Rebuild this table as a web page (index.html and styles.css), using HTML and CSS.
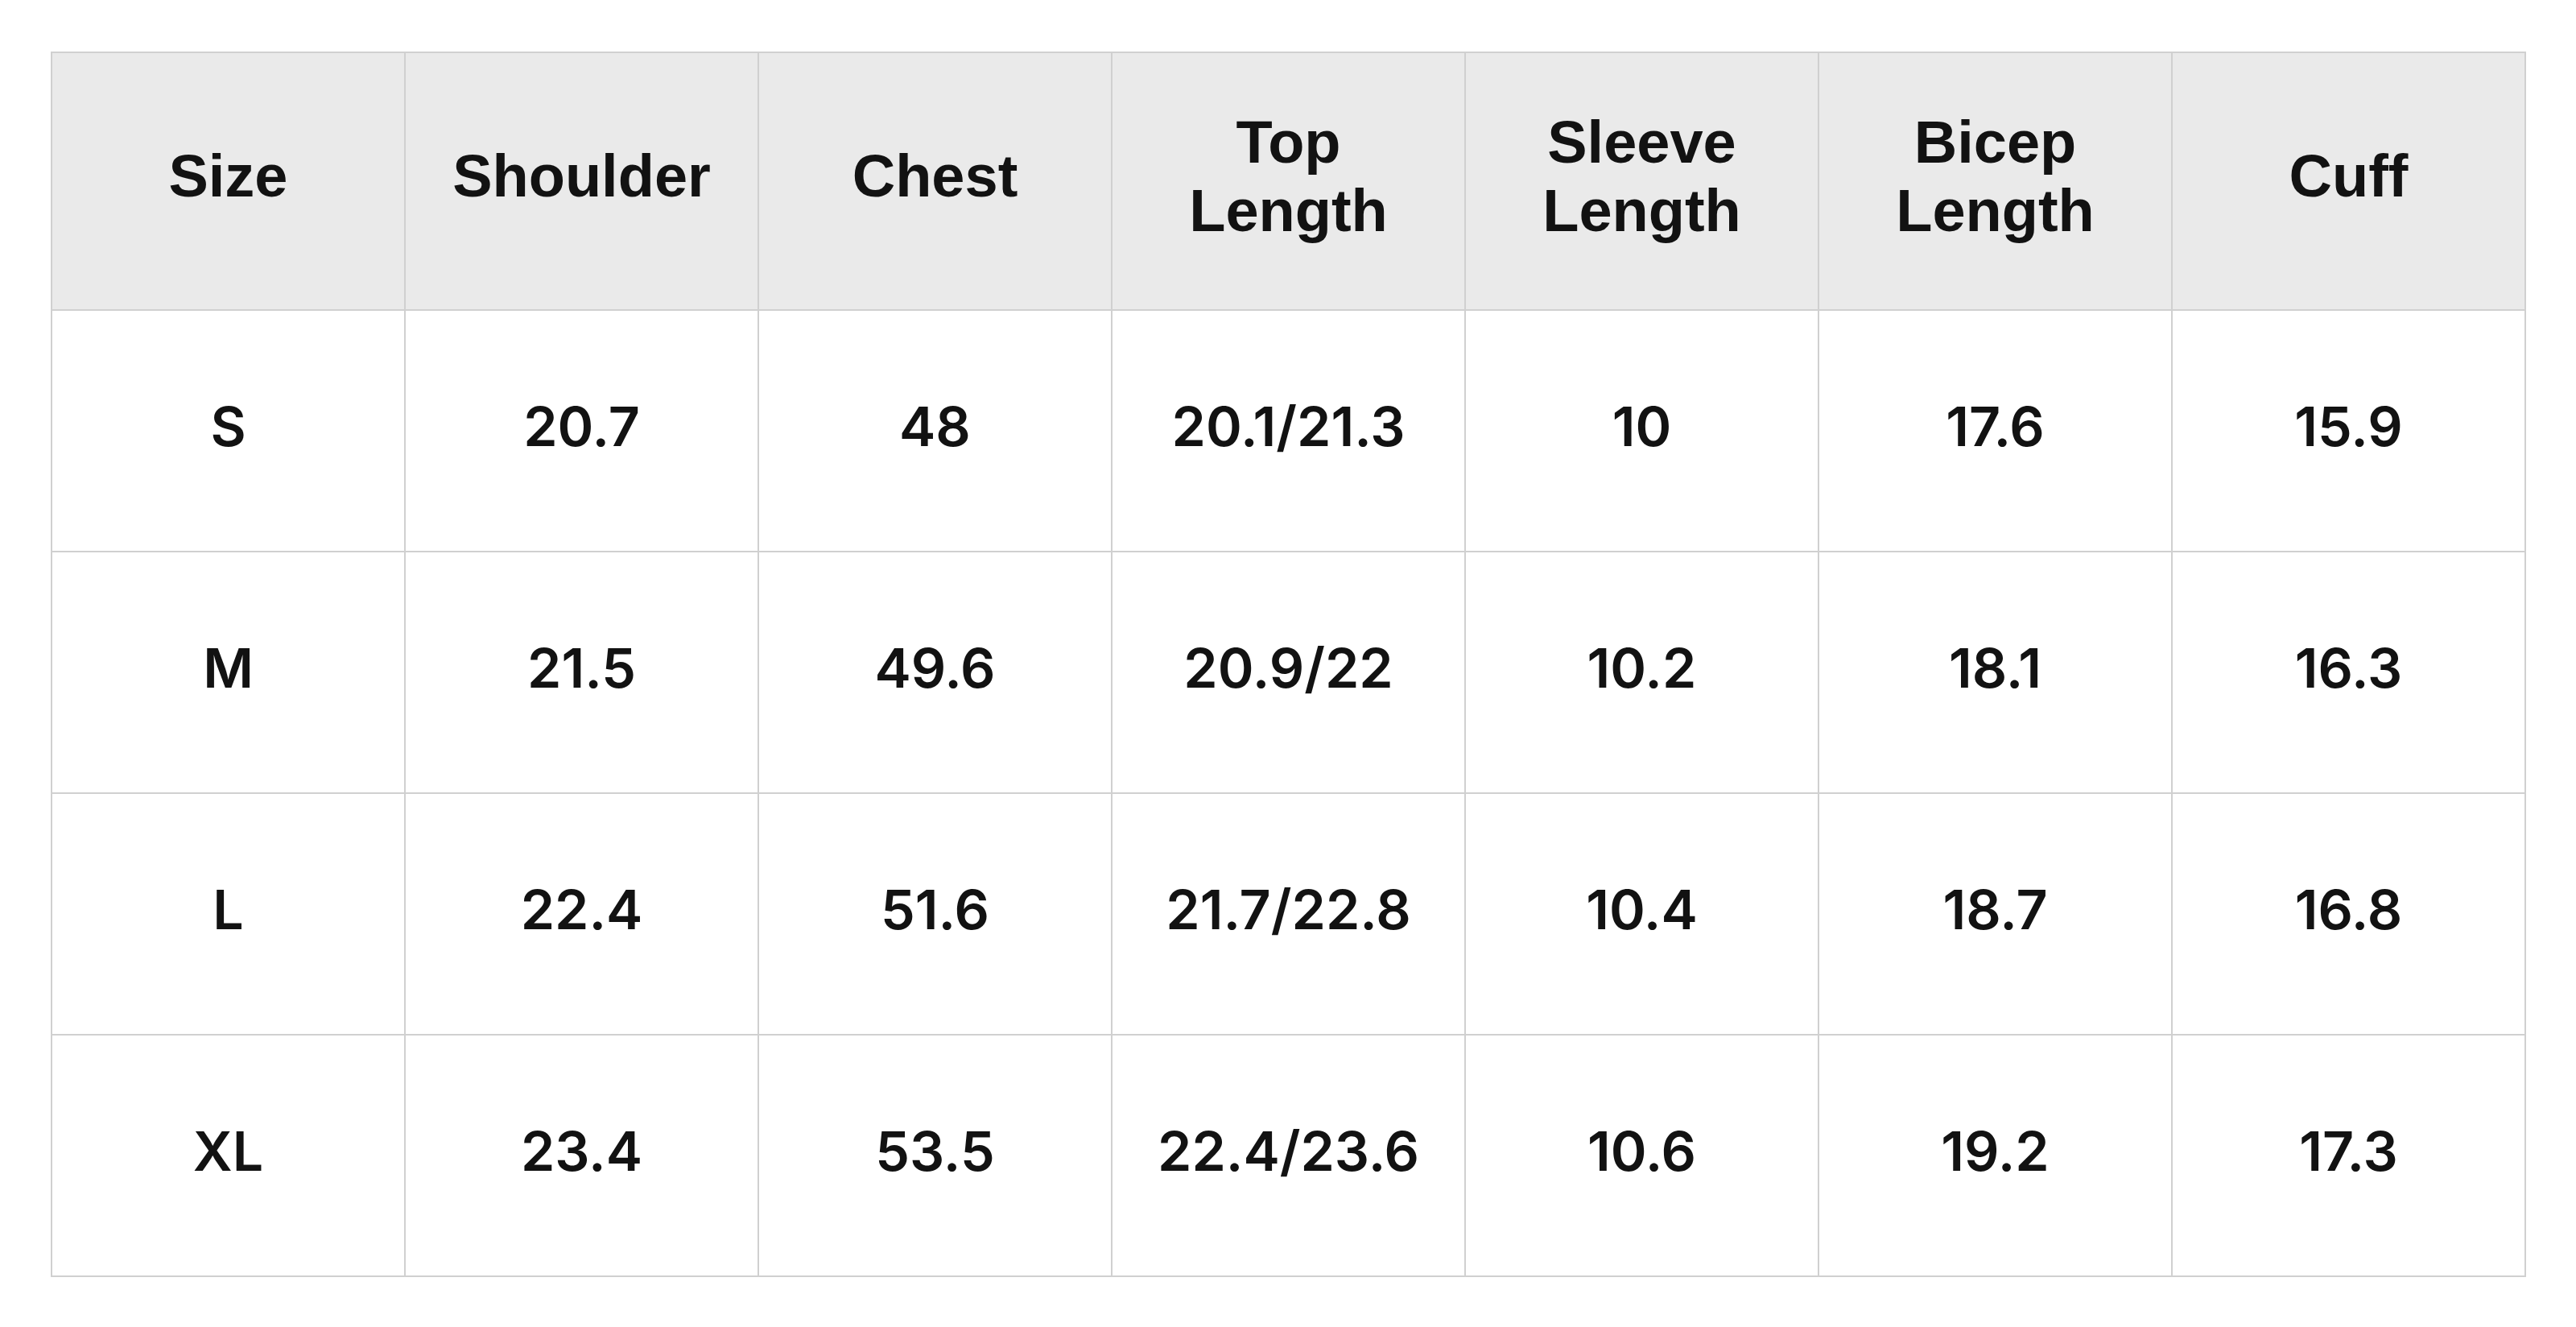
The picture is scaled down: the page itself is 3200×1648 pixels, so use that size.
FILE: index.html
```html
<!DOCTYPE html>
<html>
<head>
<meta charset="utf-8">
<link rel="stylesheet" href="styles.css">
</head>
<body>
<div class="page">
<table class="size-table">
<thead>
<tr>
<th>Size</th><th>Shoulder</th><th>Chest</th><th>Top<br>Length</th><th>Sleeve<br>Length</th><th>Bicep<br>Length</th><th>Cuff</th>
</tr>
</thead>
<tbody>
<tr><td class="lbl">S</td><td>20.7</td><td>48</td><td>20.1/21.3</td><td>10</td><td>17.6</td><td>15.9</td></tr>
<tr><td class="lbl">M</td><td>21.5</td><td>49.6</td><td>20.9/22</td><td>10.2</td><td>18.1</td><td>16.3</td></tr>
<tr><td class="lbl">L</td><td>22.4</td><td>51.6</td><td>21.7/22.8</td><td>10.4</td><td>18.7</td><td>16.8</td></tr>
<tr><td class="lbl">XL</td><td>23.4</td><td>53.5</td><td>22.4/23.6</td><td>10.6</td><td>19.2</td><td>17.3</td></tr>
</tbody>
</table>
</div>
</body>
</html>
```

FILE: styles.css
```css
html, body {
  margin: 0;
  padding: 0;
  background: #ffffff;
}
.page {
  padding: 64px 62px 0 63px;
}
.size-table {
  width: 3075px;
  border-collapse: collapse;
  table-layout: fixed;
  color: #121212;
}
.size-table th,
.size-table td {
  border: 2px solid #d0d0d0;
  text-align: center;
  vertical-align: middle;
  padding: 0;
}
.size-table th {
  height: 320px;
  padding-bottom: 12px;
  box-sizing: border-box;
  background: #eaeaea;
  font-family: "Liberation Sans", Arial, sans-serif;
  font-weight: 700;
  font-size: 74px;
  line-height: 1.15;
}
.size-table td {
  height: 300px;
  padding-bottom: 10px;
  box-sizing: border-box;
  font-family: Inter, "Noto Sans", sans-serif;
  font-weight: 560;
  font-size: 68px;
  line-height: 1.2;
}
.size-table td.lbl {
  font-weight: 600;
  font-size: 68px;
}
```
